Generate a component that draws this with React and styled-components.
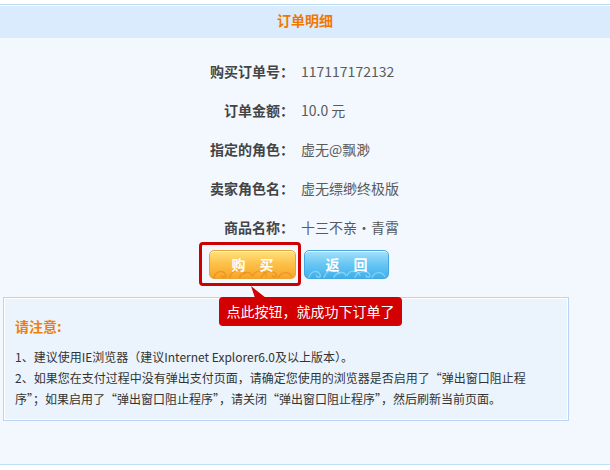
import React from "react";
import styled, { createGlobalStyle } from "styled-components";

const GlobalStyle = createGlobalStyle`
  html, body {
    margin: 0;
    background: #fff;
    font-family: "Noto Sans CJK SC", "Liberation Sans", sans-serif;
  }
`;

const rows = [
  ["购买订单号：", "117117172132"],
  ["订单金额：", "10.0 元"],
  ["指定的角色：", "虚无@飘渺"],
  ["卖家角色名：", "虚无缥缈终极版"],
  ["商品名称：", "十三不亲・青霄"],
];

const Cloud = ({ color }) => (
  <Deco viewBox="0 0 87 14" preserveAspectRatio="none">
    <g fill="none" stroke={color} strokeWidth="1.4">
      <path d="M4 14 C6 6 14 6 16 11 C17 14 12 14 12 11" />
      <path d="M20 14 C22 5 33 4 36 10" />
      <path d="M30 14 C33 7 42 7 43 12" />
      <path d="M44 12 C46 6 55 5 58 12" />
      <path d="M52 14 C55 6 66 6 68 11 C69 14 64 14 64 11" />
      <path d="M70 14 C73 7 81 7 84 13" />
    </g>
  </Deco>
);

const App = () => {
  return (
    <>
      <GlobalStyle />
      <Page>
        <Header>订单明细</Header>
        <Body>
          <InfoGrid>
            {rows.map(([label, value]) => (
              <React.Fragment key={label}>
                <Label>{label}</Label>
                <Value>{value}</Value>
              </React.Fragment>
            ))}
          </InfoGrid>
          <ButtonRow>
            <BuyWrap>
              <Button $variant="buy">
                <Cloud color="rgba(230,120,20,0.45)" />
                <span>购　买</span>
              </Button>
              <Highlight />
              <Tip>点此按钮，就成功下订单了</Tip>
            </BuyWrap>
            <Button $variant="back">
              <Cloud color="rgba(170,225,250,0.6)" />
              <span>返　回</span>
            </Button>
          </ButtonRow>
          <Notice>
            <NoticeTitle>请注意:</NoticeTitle>
            <NoticeText>
              <p>1、建议使用IE浏览器（建议Internet Explorer6.0及以上版本）。</p>
              <p>
                2、如果您在支付过程中没有弹出支付页面，请确定您使用的浏览器是否启用了“弹出窗口阻止程序”；如果启用了“弹出窗口阻止程序”，请关闭“弹出窗口阻止程序”，然后刷新当前页面。
              </p>
            </NoticeText>
          </Notice>
        </Body>
      </Page>
    </>
  );
};

export default App;

const Page = styled.div`
  padding-top: 4px;
`;

const Header = styled.div`
  border-top: 1px solid #b8dcf4;
  box-shadow: inset 0 1px 0 #fff;
  background: #d9ebfd;
  height: 33px;
  line-height: 30px;
  text-align: center;
  color: #f07800;
  font-size: 14px;
  font-weight: bold;
`;

const Body = styled.div`
  background: #f3f8ff;
  border-bottom: 1px solid #bde0f7;
  padding: 14px 0 43px;
`;

const InfoGrid = styled.div`
  display: grid;
  grid-template-columns: 294px 1fr;
  grid-auto-rows: 38.8px;
  align-items: center;
  font-size: 14px;
`;

const Label = styled.div`
  text-align: right;
  font-weight: bold;
  color: #444;
`;

const Value = styled.div`
  padding-left: 7px;
  color: #5a5a5a;
`;

const ButtonRow = styled.div`
  display: flex;
  gap: 8px;
  margin-top: 4px;
  padding-left: 209px;
  position: relative;
  z-index: 2;
`;

const BuyWrap = styled.div`
  position: relative;
`;

const Button = styled.button`
  position: relative;
  overflow: hidden;
  box-sizing: border-box;
  width: ${(p) => (p.$variant === "buy" ? "87px" : "85px")};
  height: 29px;
  padding: 0;
  border-radius: 5px;
  border: 1px solid ${(p) => (p.$variant === "buy" ? "#e9a43a" : "#46a6df")};
  background: ${(p) =>
    p.$variant === "buy"
      ? "linear-gradient(#ffe27f, #fdc24a 45%, #f7a528)"
      : "linear-gradient(#a6e0fb, #6cc8f4 45%, #3db0ec)"};
  box-shadow: inset 0 1px 0 rgba(255, 255, 255, 0.7);
  color: #fff;
  font-family: "Noto Sans CJK SC", sans-serif;
  font-size: 14px;
  font-weight: bold;
  cursor: pointer;

  span {
    position: relative;
  }
`;

const Deco = styled.svg`
  position: absolute;
  left: 0;
  bottom: 0;
  width: 100%;
  height: 14px;
`;

const Highlight = styled.div`
  position: absolute;
  left: -10px;
  top: -8px;
  width: 102px;
  height: 44px;
  box-sizing: border-box;
  border: 3px solid #cc0000;
  border-radius: 4px;
  pointer-events: none;
`;

const Tip = styled.div`
  position: absolute;
  left: 10px;
  top: 47px;
  width: 183px;
  height: 29px;
  line-height: 29px;
  box-sizing: border-box;
  border-radius: 4px;
  background: #d20000;
  color: #fff;
  font-size: 14px;
  text-align: center;
  white-space: nowrap;

  &::before {
    content: "";
    position: absolute;
    left: 31px;
    top: -11px;
    width: 17px;
    height: 12px;
    background: #d20000;
    clip-path: polygon(1px 0, 16px 12px, 5px 12px);
  }
`;

const Notice = styled.div`
  margin: 18px 0 0 3px;
  width: 566px;
  height: 124px;
  box-sizing: border-box;
  border: 1px solid #bad4f7;
  box-shadow: inset 0 0 0 1px #fff;
  background: #ebf3fc;
  padding: 18px 0 0 11px;
`;

const NoticeTitle = styled.div`
  color: #f08000;
  font-size: 14px;
  font-weight: bold;
  line-height: 20px;
`;

const NoticeText = styled.div`
  margin-top: 10px;
  width: 525px;
  font-size: 12px;
  line-height: 21px;
  color: #333;

  p {
    margin: 0;
  }
`;
